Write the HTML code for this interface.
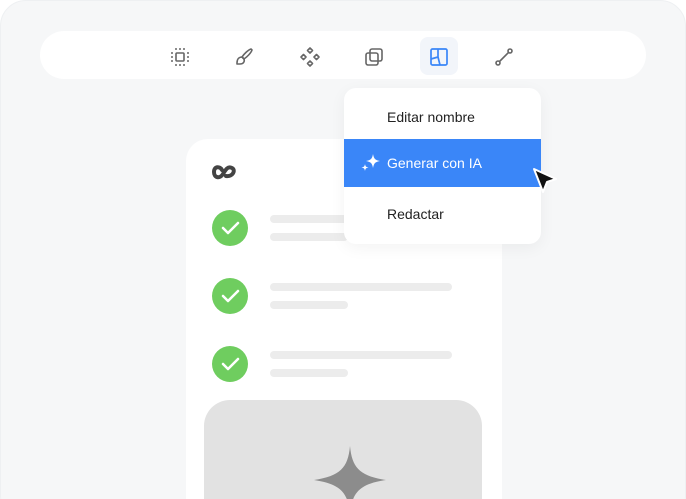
<!DOCTYPE html>
<html><head><style>
html,body{margin:0;width:686px;height:499px;overflow:hidden}
body{background:#fff;font-family:"Liberation Sans",sans-serif;position:relative}
.frame{position:absolute;left:0;top:0;width:684px;height:520px;background:#f6f7f8;border:1px solid #eef0f2;border-radius:26px}
.tb{position:absolute;left:40px;top:31px;width:606px;height:48px;background:#fff;border-radius:24px}
.ic{position:absolute;top:45px}
.card{position:absolute;left:186px;top:139px;width:316px;height:360px;background:#fff;border-radius:22px 22px 0 0}
.chk{position:absolute;left:212px;width:36px;height:36px;border-radius:50%;background:#6fcd5f}
.ln{position:absolute;height:8px;border-radius:4px;background:#ececec}
.img{position:absolute;left:204px;top:400px;width:278px;height:99px;background:#e2e2e2;border-radius:26px 26px 0 0}
.menu{position:absolute;left:344px;top:88px;width:197px;height:156px;background:#fff;border-radius:12px;box-shadow:0 4px 16px rgba(0,0,0,.05)}
.it{position:absolute;left:43px;font-size:14px;color:#222}
.hl{position:absolute;left:0;top:51px;width:197px;height:48px;background:#3a86f8}
</style></head><body>
<div class="frame"></div>
<div class="tb"></div>
<div style="position:absolute;left:420px;top:37px;width:38px;height:38px;border-radius:8px;background:#f2f5fa"></div>
<svg class="ic" style="left:168px" width="24" height="24" viewBox="0 0 24 24" fill="none" stroke="#666" stroke-width="1.6" stroke-linecap="round"><rect x="8" y="8" width="8" height="8" rx="1"/><path d="M4 8v0M4 12v0M4 16v0M20 8v0M20 12v0M20 16v0M8 4v0M12 4v0M16 4v0M8 20v0M12 20v0M16 20v0" stroke-width="2"/></svg>
<svg class="ic" style="left:232px" width="24" height="24" viewBox="0 0 24 24" fill="none" stroke="#666" stroke-width="1.6" stroke-linejoin="round"><path d="M19 4c-3 1-7 5-9 8l2 2c3-2 7-6 8-9z"/><path d="M10 12c-3 0-5 2-5 6v1h3c3 0 5-2 4-5z"/></svg>
<svg class="ic" style="left:298px" width="24" height="24" viewBox="0 0 24 24" fill="none" stroke="#666" stroke-width="1.6" stroke-linejoin="round"><path d="M12 3l2.5 2.5L12 8 9.5 5.5zM12 16l2.5 2.5L12 21l-2.5-2.5zM5.5 9.5L8 12l-2.5 2.5L3 12zM18.5 9.5L21 12l-2.5 2.5L16 12z"/></svg>
<svg class="ic" style="left:362px" width="24" height="24" viewBox="0 0 24 24" fill="none" stroke="#666" stroke-width="1.6"><rect x="4" y="8" width="12" height="12" rx="2"/><rect x="8" y="4" width="12" height="12" rx="2"/></svg>
<svg class="ic" style="left:427px" width="24" height="24" viewBox="0 0 24 24" fill="none" stroke="#3a86f8" stroke-width="1.7" stroke-linejoin="round"><rect x="4" y="4" width="16" height="16" rx="1.5"/><path d="M11 4v8l2 8M4 14l7-2"/></svg>
<svg class="ic" style="left:492px" width="24" height="24" viewBox="0 0 24 24" fill="none" stroke="#666" stroke-width="1.6"><circle cx="6" cy="18" r="2"/><circle cx="18" cy="6" r="2"/><path d="M7.5 16.5l9-9"/></svg>
<div class="card"></div>
<svg style="position:absolute;left:210px;top:162px" width="28" height="22" viewBox="0 0 28 22" fill="none" stroke="#444" stroke-width="4" stroke-linecap="round"><path d="M12 8C10 4 4 4 4 10s6 7 9 2 5-8 9-6 1 9-6 8"/></svg>
<div class="chk" style="top:210px"></div><div class="chk" style="top:278px"></div><div class="chk" style="top:346px"></div>
<svg style="position:absolute;left:212px;top:210px" width="36" height="172" viewBox="0 0 36 172" fill="none" stroke="#fff" stroke-width="2.5" stroke-linecap="round" stroke-linejoin="round"><path d="M11 18l5 5 10-10M11 86l5 5 10-10M11 154l5 5 10-10"/></svg>
<div class="ln" style="left:270px;top:215px;width:190px"></div><div class="ln" style="left:270px;top:233px;width:78px"></div>
<div class="ln" style="left:270px;top:283px;width:182px"></div><div class="ln" style="left:270px;top:301px;width:78px"></div>
<div class="ln" style="left:270px;top:351px;width:182px"></div><div class="ln" style="left:270px;top:369px;width:78px"></div>
<div class="img"></div>
<svg style="position:absolute;left:314px;top:446px" width="72" height="53" viewBox="0 0 72 53"><path d="M36 0C38 22 46 30 72 34 46 38 38 46 36 68 34 46 26 38 0 34 26 30 34 22 36 0z" fill="#8c8c8c"/></svg>
<div class="menu">
<div class="it" style="top:21px">Editar nombre</div>
<div class="hl"></div>
<svg style="position:absolute;left:16px;top:64px" width="22" height="22" viewBox="0 0 22 22" fill="#fff"><path d="M13 2c1 5 2 6 7 7-5 1-6 2-7 7-1-5-2-6-7-7 5-1 6-2 7-7z"/><path d="M5 12c.5 2.5 1 3 3.5 3.5C6 16 5.5 16.5 5 19c-.5-2.5-1-3-3.5-3.5C4 15 4.5 14.5 5 12z"/></svg>
<div class="it" style="top:67px;color:#fff">Generar con IA</div>
<div class="it" style="top:118px">Redactar</div>
</div>
<svg style="position:absolute;left:530px;top:165px" width="30" height="32" viewBox="0 0 30 32"><path d="M4 4l22 10-9 3-4 10z" fill="#111" stroke="#fff" stroke-width="2" stroke-linejoin="round"/></svg>
</body></html>
